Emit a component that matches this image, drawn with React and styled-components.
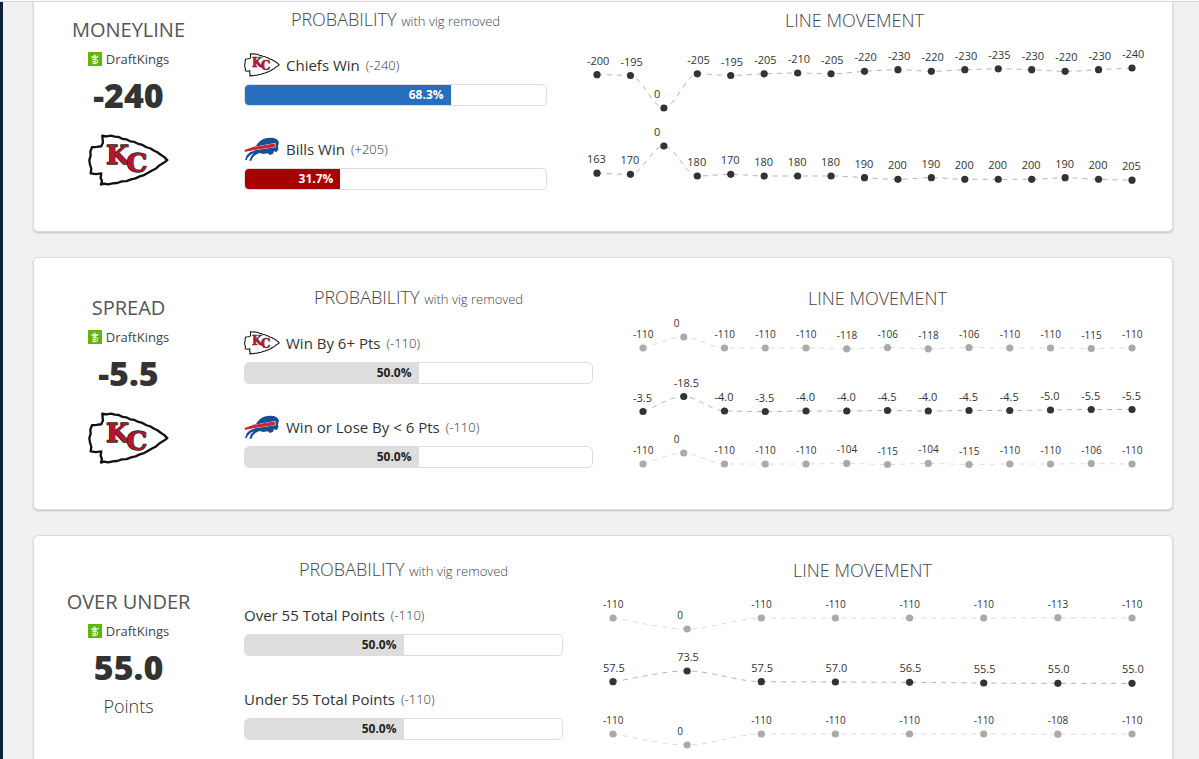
import React, { useLayoutEffect, useRef, useState } from "react";
import styled, { createGlobalStyle } from "styled-components";

const GlobalStyle = createGlobalStyle`
  * { box-sizing: border-box; }
  html, body { margin: 0; height: 100%; }
  body {
    background: #f1f1f1;
    color: #333;
    font-family: "Open Sans", "Noto Sans", sans-serif;
    overflow: hidden;
  }
  #root { height: 100%; }
  h2, h3, p { margin: 0; font-weight: 400; }
`;

const Page = styled.div`
  display: flex;
  flex-direction: column;
  height: 100%;
`;

const TopBar = styled.header`
  flex: none;
  height: 2px;
  background: #fafafa;
  border-bottom: 1px solid #d8d8d8;
  z-index: 1;
`;

const Body = styled.main`
  flex: 1;
  min-height: 0;
  overflow: hidden;
  border-left: 3px solid #0f2138;
`;

const CardList = styled.div`
  display: flex;
  flex-direction: column;
  gap: 25px;
  margin: -23px 26px 0 30px;
`;

const Card = styled.section`
  display: grid;
  grid-template-columns: 171px minmax(0, ${(p) => p.$bars}fr) minmax(0, ${(p) => p.$chart}fr);
  column-gap: 30px;
  align-items: center;
  min-height: ${(p) => (p.$compact ? 241 : 253)}px;
  padding: 0 40px 0 9px;
  background: #fff;
  border: 1px solid #dcdcdc;
  border-radius: 5px;
  box-shadow: 0 1px 2px rgba(0, 0, 0, 0.2);
`;

const Summary = styled.div`
  display: flex;
  flex-direction: column;
  align-items: center;
  padding-bottom: 2px;
`;

const MarketName = styled.h2`
  font-size: 20px;
  line-height: 30px;
  color: #555;
  white-space: nowrap;
`;

const Book = styled.p`
  display: flex;
  align-items: center;
  gap: 4px;
  font-size: 13px;
  line-height: 29px;
  color: #444;
`;

const Price = styled.p`
  margin-bottom: 2px;
  font-size: 34px;
  font-weight: 800;
  line-height: 42px;
`;

const Unit = styled.p`
  font-size: 18px;
  font-weight: 300;
  line-height: 33px;
`;

const TeamMark = styled.div`
  display: flex;
  margin: 16px 0 8px;
`;

const Block = styled.div`
  min-width: 0;
  padding-bottom: ${(p) => (p.$tail ? 15 : 0)}px;
`;

const Heading = styled.h3`
  font-size: 18px;
  font-weight: 300;
  line-height: ${(p) => (p.$tight ? 26 : 28)}px;
  text-align: center;
  white-space: nowrap;
  color: #444;
`;

const Note = styled.small`
  font-size: 13px;
`;

const Outcomes = styled.div`
  display: flex;
  flex-direction: column;
  gap: 30px;
  margin-top: 18px;
`;

const OutcomeLabel = styled.div`
  display: flex;
  align-items: center;
  gap: 6px;
  height: 26px;
  margin-bottom: 6px;
  font-size: 15px;
  white-space: nowrap;
`;

const Odds = styled.span`
  font-size: 13px;
  font-weight: 300;
`;

const Track = styled.div`
  height: 22px;
  overflow: hidden;
  background: #fff;
  border: 1px solid #ddd;
  border-radius: 5px;
`;

const tones = {
  blue: { bg: "#276ebe", fg: "#fff" },
  red: { bg: "#a80000", fg: "#fff" },
  grey: { bg: "#ddd", fg: "#222" },
};

const Fill = styled.div`
  height: 100%;
  padding-right: 7px;
  background: ${(p) => tones[p.$tone].bg};
  color: ${(p) => tones[p.$tone].fg};
  font-size: 12px;
  font-weight: 700;
  line-height: 20px;
  text-align: right;
`;

const Plot = styled.svg`
  display: block;
  width: 100%;
  height: 171px;
  overflow: visible;
`;

const Trend = styled.path`
  fill: none;
  stroke: ${(p) => (p.$faint ? "#dcdcdc" : "#b4b4b4")};
  stroke-width: 1px;
  stroke-dasharray: 5px 5px;
`;

const Dot = styled.circle`
  fill: ${(p) => (p.$faint ? "#aaa" : "#333")};
`;

const PointLabel = styled.text`
  fill: #333;
  font-size: ${(p) => (p.$faint ? 10 : 11)}px;
`;

function ChiefsLogo({ width, height }) {
  return (
    <svg width={width} height={height} viewBox="26 12 244 160" preserveAspectRatio="none" aria-label="Chiefs">
      <path
        d="M69 17 L82 19 L95 17 L107 20 L119 21 L130 27 L141 28 L153 34 L166 36 L178 42 L190 45 L202 52 L213 55 L224 62 L235 67 L244 74 L255 81 L265 91 L254 99 L242 106 L231 116 L219 122 L207 129 L195 136 L182 140 L169 146 L156 149 L142 154 L128 155 L114 160 L100 161 L87 164 L74 162 L65 165 L68 154 L64 144 L66 131 L50 133 L34 131 L36 117 L32 104 L30 91 L34 77 L33 65 L38 52 L52 51 L66 49 L71 38 Z"
        fill="#fff"
        stroke="#111"
        strokeWidth="7"
        strokeLinejoin="round"
      />
      <text
        x="80"
        y="104"
        fontFamily='"DejaVu Serif", serif'
        fontSize="80"
        fontWeight="700"
        fill="#b5152f"
        stroke="#222"
        strokeWidth="4"
        paintOrder="stroke"
        strokeLinejoin="round"
      >
        K<tspan dx="-8" dy="23">C</tspan>
      </text>
    </svg>
  );
}

function BillsLogo() {
  return (
    <svg width="36" height="24" viewBox="0 0 108 72" aria-label="Bills">
      <path
        d="M22 31 L36 27 Q44 12 60 5 Q76 0 90 3 L100 8 L105 16 L102 28 L103 38 L97 46 L90 42 L87 50 L78 54 L71 49 L58 51 L46 48 L34 54 L27 61 L22 71 L16 71 L21 58 L30 49 L20 53 L11 62 L8 69 L3 69 L8 55 L18 46 L34 40 Z"
        fill="#164f94"
      />
      <path d="M1 38 L24 30 L94 18 L95 31 L42 38 L1 45 Z" fill="#fff" />
      <path d="M3 40 L26 32 L91 21 L91 29 L40 36 L3 43 Z" fill="#d0202e" stroke="#d0202e" strokeWidth="3" />
    </svg>
  );
}

function DraftKingsIcon() {
  return (
    <svg width="14" height="14" viewBox="0 0 42 42" aria-hidden="true">
      <rect width="42" height="42" fill="#61b510" />
      <path d="M9 11 L16 14 L18 6 L22 9 L24 14 L33 10 L29 18 L12 19 Z" fill="#e9f6da" />
      <path d="M13 22 H23 Q30 23 29 29 Q28 35 20 35 H13 M21 18 V35 M12 29 H21" fill="none" stroke="#fff" strokeWidth="3" />
    </svg>
  );
}

// Monotone cubic curve through evenly spaced points.
function monotonePath(points) {
  const n = points.length;
  const dx = points[1].x - points[0].x;
  const slopes = points.slice(1).map((p, i) => (p.y - points[i].y) / dx);
  const tangents = points.map((_, i) => {
    if (i === 0) return slopes[0];
    if (i === n - 1) return slopes[n - 2];
    const a = slopes[i - 1];
    const b = slopes[i];
    return a * b <= 0 ? 0 : (2 * a * b) / (a + b);
  });
  let d = `M${points[0].x},${points[0].y}`;
  for (let i = 0; i < n - 1; i += 1) {
    const p = points[i];
    const q = points[i + 1];
    d += `C${p.x + dx / 3},${p.y + (tangents[i] * dx) / 3} ${q.x - dx / 3},${q.y - (tangents[i + 1] * dx) / 3} ${q.x},${q.y}`;
  }
  return d;
}

const INSET = 20;

function LineChart({ series }) {
  const ref = useRef(null);
  const [width, setWidth] = useState(540);

  useLayoutEffect(() => {
    const measure = () => setWidth(ref.current.getBoundingClientRect().width);
    measure();
    window.addEventListener("resize", measure);
    return () => window.removeEventListener("resize", measure);
  }, []);

  return (
    <Plot ref={ref}>
      {series.map((s, k) => {
        const step = (width - INSET) / (s.values.length - 1);
        const points = s.values.map((v, i) => ({ x: INSET + i * step, y: s.zero + v * s.scale, v }));
        return (
          <g key={k}>
            <Trend $faint={s.faint} d={monotonePath(points)} />
            {points.map((p, i) => (
              <React.Fragment key={i}>
                <Dot $faint={s.faint} cx={p.x} cy={p.y} r="3.6" />
                <PointLabel $faint={s.faint} x={p.x - 10} y={p.y - 10}>
                  {s.digits ? p.v.toFixed(s.digits) : p.v}
                </PointLabel>
              </React.Fragment>
            ))}
          </g>
        );
      })}
    </Plot>
  );
}

function Outcome({ team, label, odds, chance, tone = "grey" }) {
  return (
    <div>
      <OutcomeLabel>
        {team === "chiefs" && <ChiefsLogo width={36} height={24} />}
        {team === "bills" && <BillsLogo />}
        <span>{label}</span>
        <Odds>({odds})</Odds>
      </OutcomeLabel>
      <Track role="meter" aria-label={label} aria-valuemin={0} aria-valuemax={100} aria-valuenow={chance}>
        <Fill $tone={tone} style={{ width: `${chance}%` }}>
          {chance.toFixed(1)}%
        </Fill>
      </Track>
    </div>
  );
}

const markets = [
  {
    name: "MONEYLINE",
    price: "-240",
    bars: 303,
    chart: 555,
    outcomes: [
      { team: "chiefs", label: "Chiefs Win", odds: "-240", chance: 68.3, tone: "blue" },
      { team: "bills", label: "Bills Win", odds: "+205", chance: 31.7, tone: "red" },
    ],
    series: [
      { zero: 74, scale: 1 / 6, values: [-200, -195, 0, -205, -195, -205, -210, -205, -220, -230, -220, -230, -235, -230, -220, -230, -240] },
      { zero: 112, scale: 1 / 6, values: [163, 170, 0, 180, 170, 180, 180, 180, 190, 200, 190, 200, 200, 200, 190, 200, 205] },
    ],
  },
  {
    name: "SPREAD",
    price: "-5.5",
    bars: 349,
    chart: 509,
    outcomes: [
      { team: "chiefs", label: "Win By 6+ Pts", odds: "-110", chance: 50 },
      { team: "bills", label: "Win or Lose By < 6 Pts", odds: "-110", chance: 50 },
    ],
    series: [
      { faint: true, zero: 25, scale: -0.1, values: [-110, 0, -110, -110, -110, -118, -106, -118, -106, -110, -110, -115, -110] },
      { digits: 1, zero: 103, scale: 1, values: [-3.5, -18.5, -4, -3.5, -4, -4, -4.5, -4, -4.5, -4.5, -5, -5.5, -5.5] },
      { faint: true, zero: 141, scale: -0.1, values: [-110, 0, -110, -110, -110, -104, -115, -104, -115, -110, -110, -106, -110] },
    ],
  },
  {
    name: "OVER UNDER",
    price: "55.0",
    unit: "Points",
    compact: true,
    bars: 319,
    chart: 539,
    outcomes: [
      { label: "Over 55 Total Points", odds: "-110", chance: 50 },
      { label: "Under 55 Total Points", odds: "-110", chance: 50 },
    ],
    series: [
      { faint: true, zero: 45, scale: 0.1, values: [-110, 0, -110, -110, -110, -110, -113, -110] },
      { digits: 1, zero: 136, scale: -2 / 3, values: [57.5, 73.5, 57.5, 57, 56.5, 55.5, 55, 55] },
      { faint: true, zero: 161, scale: 0.1, values: [-110, 0, -110, -110, -110, -110, -108, -110] },
    ],
  },
];

function MarketCard({ market }) {
  return (
    <Card $bars={market.bars} $chart={market.chart} $compact={market.compact}>
      <Summary>
        <MarketName>{market.name}</MarketName>
        <Book>
          <DraftKingsIcon />
          DraftKings
        </Book>
        <Price>{market.price}</Price>
        {market.unit ? (
          <Unit>{market.unit}</Unit>
        ) : (
          <TeamMark>
            <ChiefsLogo width={81} height={53} />
          </TeamMark>
        )}
      </Summary>
      <Block $tail>
        <Heading $tight>
          PROBABILITY <Note>with vig removed</Note>
        </Heading>
        <Outcomes>
          {market.outcomes.map((o) => (
            <Outcome key={o.label} {...o} />
          ))}
        </Outcomes>
      </Block>
      <Block>
        <Heading>LINE MOVEMENT</Heading>
        <LineChart series={market.series} />
      </Block>
    </Card>
  );
}

export default function App() {
  return (
    <Page>
      <GlobalStyle />
      <TopBar />
      <Body>
        <CardList>
          {markets.map((m) => (
            <MarketCard key={m.name} market={m} />
          ))}
        </CardList>
      </Body>
    </Page>
  );
}
